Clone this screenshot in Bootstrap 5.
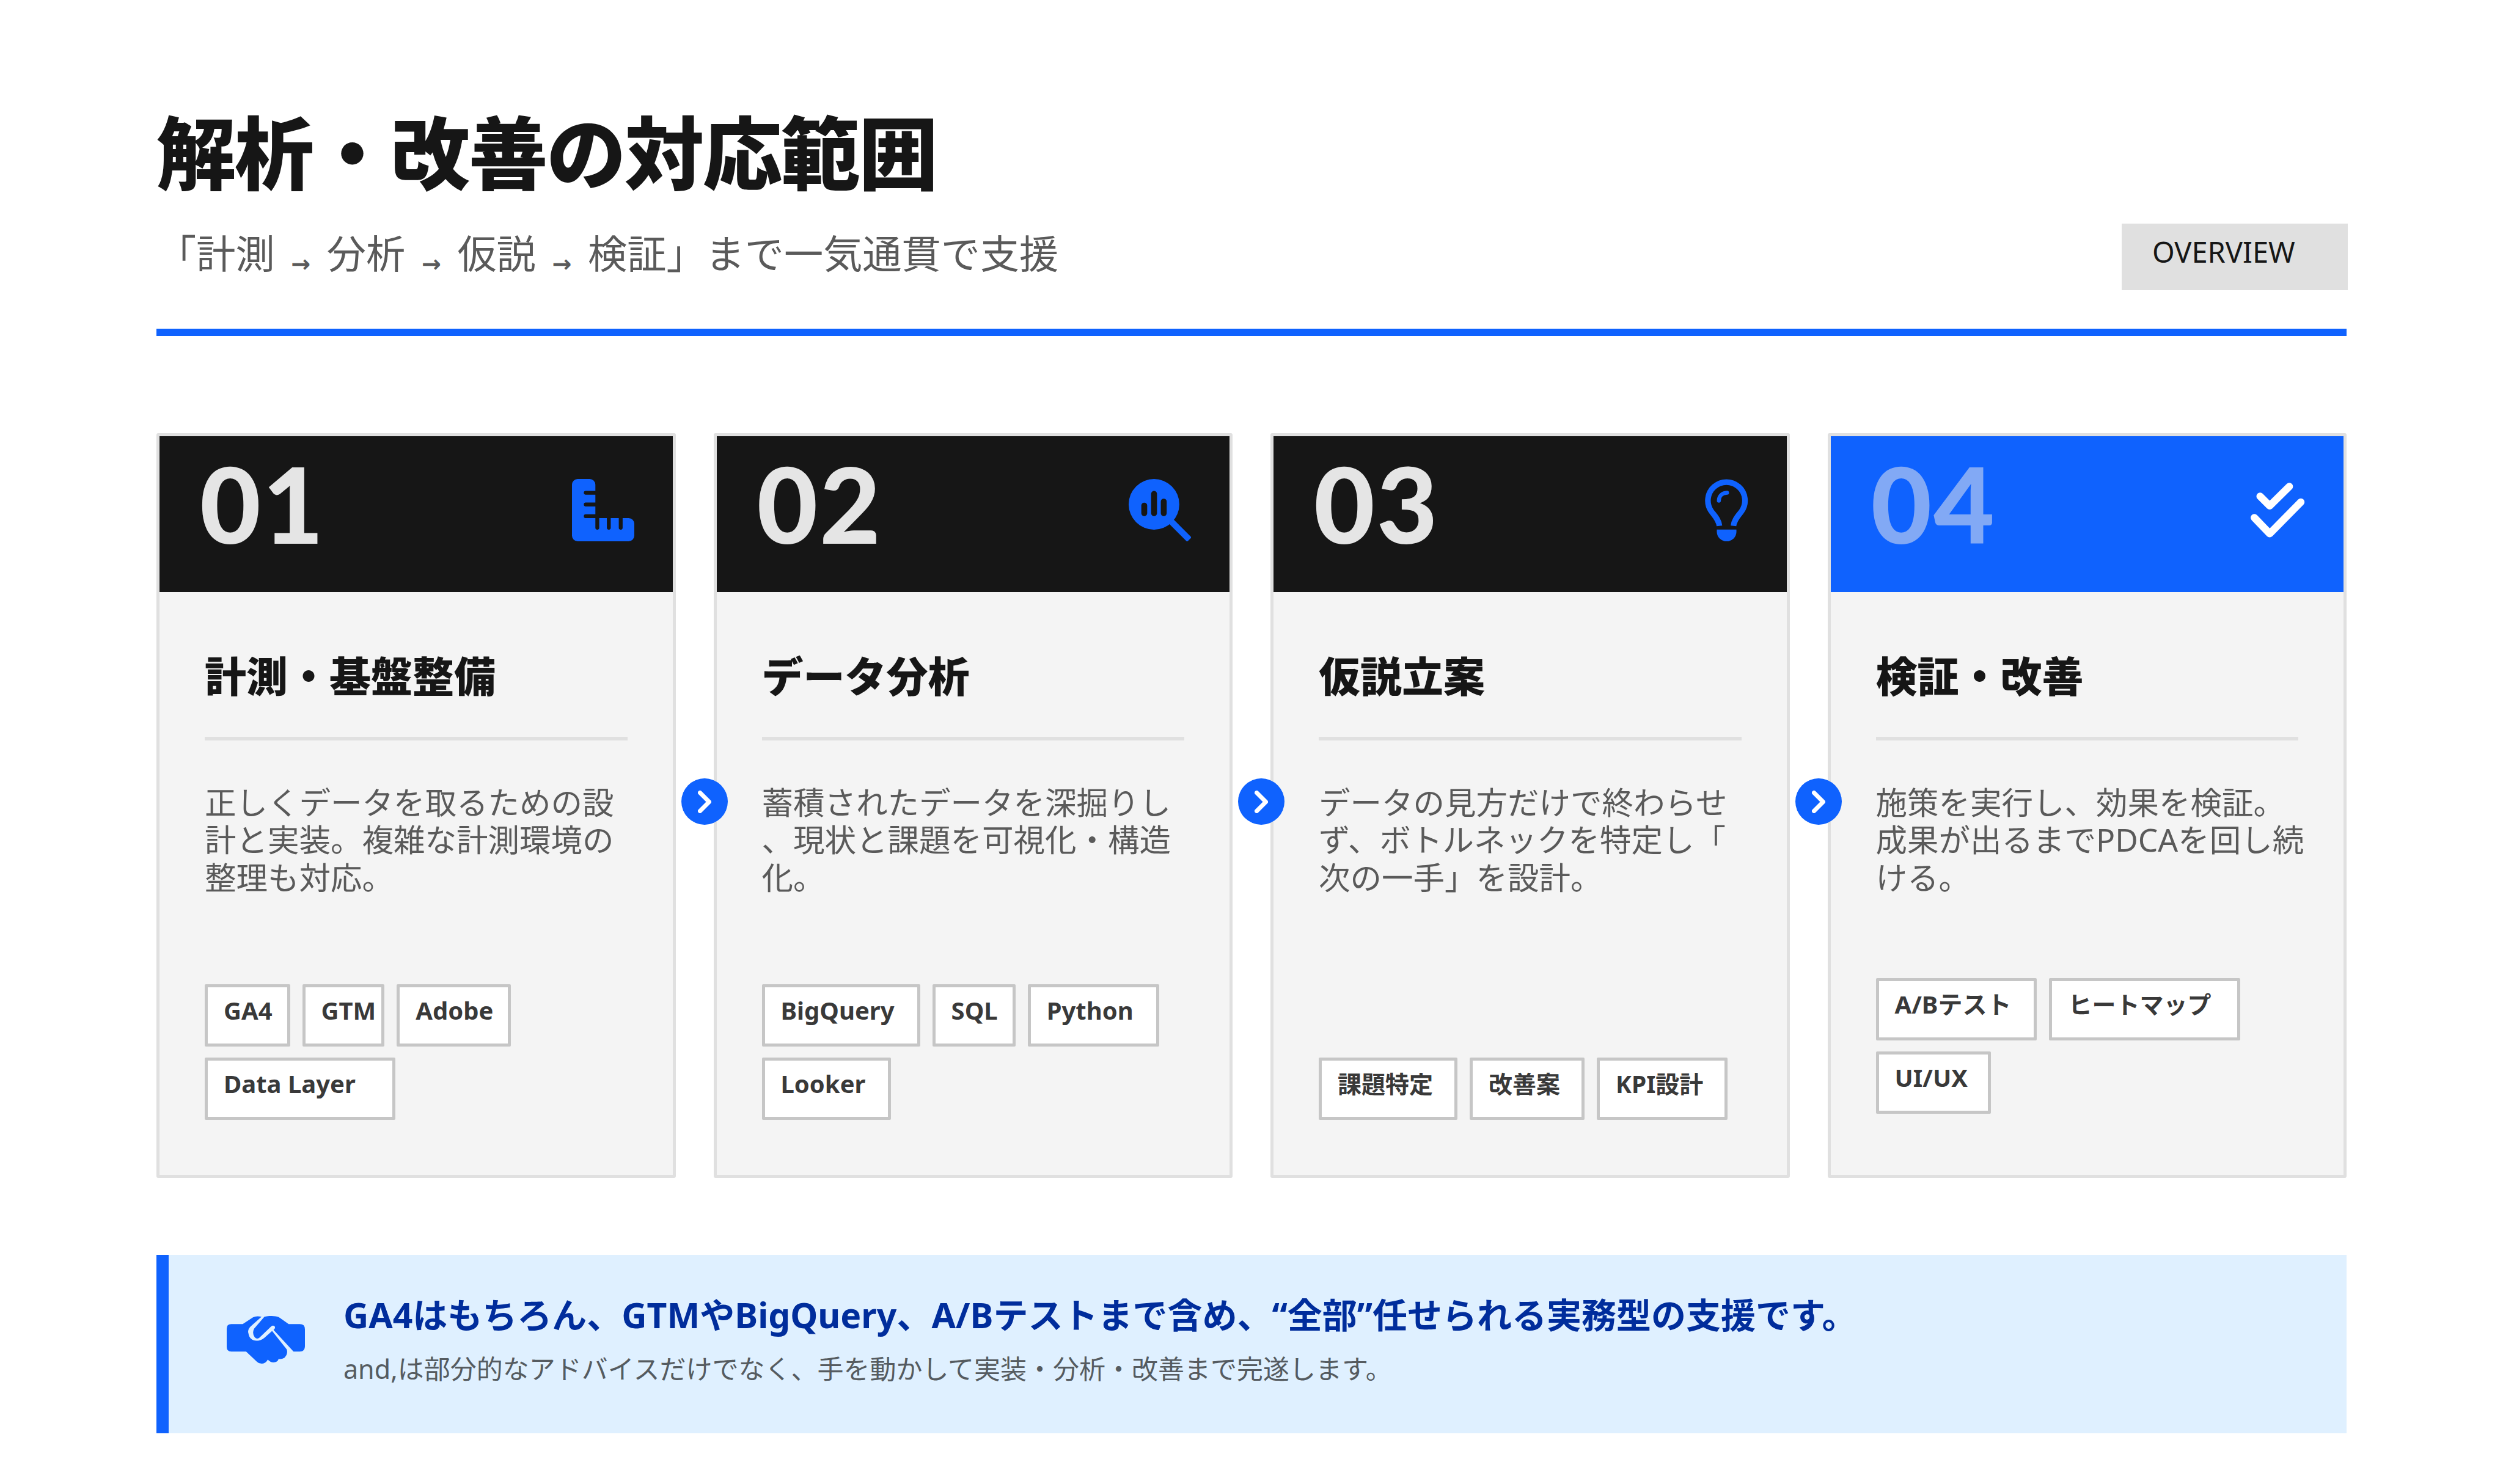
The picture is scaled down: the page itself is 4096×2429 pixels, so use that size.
<!DOCTYPE html>
<html lang="ja"><head><meta charset="utf-8">
<link href="https://cdn.jsdelivr.net/npm/bootstrap@5.3.0/dist/css/bootstrap.min.css" rel="stylesheet">
<style>
html,body{margin:0;background:#fff}
body{width:4096px;height:2429px;overflow:hidden;font-family:"Noto Sans","Noto Sans CJK JP",sans-serif;color:#161616}
.slide{width:4096px;height:2429px;padding:175px 256px 0}
.ttl{font-size:130px;font-weight:900;line-height:150px;letter-spacing:-2.3px;margin:0;color:#161616}
.sub-row{margin-top:41px;height:109px}
.sub{font-size:64.2px;font-weight:400;color:#5a5a5a;line-height:90px;margin-left:1px;padding-top:5px}
.arr{font-family:"DejaVu Sans",sans-serif;font-weight:700;font-size:38px;margin:0 10px;vertical-align:-6px}
.tagline{background:#e0e0e0;font-size:47px;width:370px;height:109px;padding:14px 0 0 50px;margin-right:-2px;color:#161616;line-height:64px}
.rule{height:12px;background:#0f62fe;margin-top:63px}
.cards{display:grid;grid-template-columns:repeat(4,1fr);gap:62px;margin-top:159px}
.step{position:relative;height:1219px;background:#f4f4f4;border:5px solid #e0e0e0;border-radius:3px}
.step-h{height:255px;background:#161616;padding:0 63px 14px 66px}
.step-h.is-last{background:#0f62fe}
.num{font-family:"Lato",sans-serif;font-weight:900;font-size:172px;letter-spacing:3px;line-height:1;color:#e5e5e5;margin-top:-22px}
.is-last .num{color:#82a9f5}
.step-b{flex:1;padding:0 74px}
.step-t{font-size:68px;font-weight:900;margin:0;padding:98px 0 59px;line-height:80px;border-bottom:6px solid #e0e0e0}
.step-d{font-size:51.5px;font-weight:400;color:#5a5a5a;line-height:61.4px;margin:71px -15px 0 0;line-break:anywhere}
.tags{margin-top:auto;gap:18px 20px;padding-bottom:90px}
.tags-up{padding-bottom:100px}
.chip{background:#fff;border:5px solid #c6c6c6;border-radius:2px;font-size:40px;font-weight:700;color:#393939;padding:14px 24px 30px 26px;line-height:48px}
.chip-s{padding-right:9px}
.chip-x{padding-right:33px}
.chip-m{padding-right:37px}
.chip-l{padding-right:60px}
.chip-j{font-size:39px;padding-right:35px}
.chip-k{font-size:39px;padding-right:43px}
.go{position:absolute;right:-90px;top:560px;width:76px;height:76px;border-radius:50%;background:#0f62fe;z-index:3}
.note{margin-top:126px;height:292px;background:#dff0ff;border-left:20px solid #0f62fe;padding-left:95px;gap:63px}
.note-ic{margin-bottom:14px}
.note-x{padding-bottom:17px}
.note-a{font-size:57px;font-weight:700;color:#002d9c;line-height:70px;margin:0}
.note-b{font-size:43px;font-weight:400;color:#555b60;line-height:50px;margin:29px 0 0}
</style></head><body>
<div class="slide">
<h1 class="ttl">解析・改善の対応範囲</h1>
<div class="sub-row d-flex justify-content-between align-items-center"><div class="sub">「計測 <span class="arr">→</span> 分析 <span class="arr">→</span> 仮説 <span class="arr">→</span> 検証」まで一気通貫で支援</div><div class="tagline">OVERVIEW</div></div>
<div class="rule"></div>
<div class="cards">
<div class="step d-flex flex-column"><div class="step-h d-flex justify-content-between align-items-center"><div class="num">01</div><svg width="102" height="102" viewBox="0 0 110 110"><path fill="#0f62fe" d="M10 0h21.3a10 10 0 0 1 10 10V69H100a10 10 0 0 1 10 10v21a10 10 0 0 1-10 10H10a10 10 0 0 1-10-10V10A10 10 0 0 1 10 0z"/><path fill="none" stroke="#161616" stroke-width="6.8" stroke-linecap="round" d="M24.3 24.3H46M24.3 45H46M24.3 65.7H46M44.7 66V86M65 66V86M86 66V86"/></svg></div>
<div class="step-b d-flex flex-column"><h3 class="step-t">計測・基盤整備</h3><p class="step-d">正しくデータを取るための設計と実装。複雑な計測環境の整理も対応。</p><div class="tags d-flex flex-wrap"><span class="chip">GA4</span><span class="chip chip-s">GTM</span><span class="chip">Adobe</span><span class="chip chip-l">Data Layer</span></div></div>
<div class="go d-flex align-items-center justify-content-center"><svg width="22" height="37" viewBox="0 0 22 37" fill="none" stroke="#fff" stroke-width="7" stroke-linecap="round" stroke-linejoin="round"><path d="M3.5 3.5l15 15-15 15"/></svg></div></div>
<div class="step d-flex flex-column"><div class="step-h d-flex justify-content-between align-items-center"><div class="num">02</div><svg width="102" height="102" viewBox="0 0 110 110"><path d="M73 73l34 34" stroke="#0f62fe" stroke-width="11" fill="none"/><path fill="#0f62fe" fill-rule="evenodd" d="M44.7 0a44.7 44.7 0 1 1 0 89.4a44.7 44.7 0 0 1 0-89.4zM27.5 41.7a5.2 5.2 0 0 0-5.2 5.2v13.6a5.2 5.2 0 0 0 10.4 0V46.9a5.2 5.2 0 0 0-5.2-5.2zM44.8 21a5.2 5.2 0 0 0-5.2 5.2v34.3a5.2 5.2 0 0 0 10.4 0V26.2a5.2 5.2 0 0 0-5.2-5.2zM61.9 34.7a5.2 5.2 0 0 0-5.2 5.2v20.6a5.2 5.2 0 0 0 10.4 0V39.9a5.2 5.2 0 0 0-5.2-5.2z"/></svg></div>
<div class="step-b d-flex flex-column"><h3 class="step-t">データ分析</h3><p class="step-d">蓄積されたデータを深掘りし、現状と課題を可視化・構造化。</p><div class="tags d-flex flex-wrap"><span class="chip chip-m">BigQuery</span><span class="chip">SQL</span><span class="chip chip-m">Python</span><span class="chip chip-m">Looker</span></div></div>
<div class="go d-flex align-items-center justify-content-center"><svg width="22" height="37" viewBox="0 0 22 37" fill="none" stroke="#fff" stroke-width="7" stroke-linecap="round" stroke-linejoin="round"><path d="M3.5 3.5l15 15-15 15"/></svg></div></div>
<div class="step d-flex flex-column"><div class="step-h d-flex justify-content-between align-items-center"><div class="num">03</div><svg width="71" height="102" viewBox="0 0 76 110"><path fill="none" stroke="#0f62fe" stroke-width="10" d="M25.3 82.7C24 71 16 64 11 57A32.7 32.7 0 1 1 64.4 57C59.4 64 51.4 71 50.1 82.7"/><path fill="none" stroke="#0f62fe" stroke-width="7" stroke-linecap="round" d="M24.3 38.3C24.3 30 30 24.7 38.7 24.3"/><path fill="#0f62fe" d="M20.7 89.3H55.3V93A17.3 17.3 0 0 1 20.7 93z"/></svg></div>
<div class="step-b d-flex flex-column"><h3 class="step-t">仮説立案</h3><p class="step-d">データの見方だけで終わらせず、ボトルネックを特定し「次の一手」を設計。</p><div class="tags d-flex flex-wrap"><span class="chip chip-j">課題特定</span><span class="chip chip-j">改善案</span><span class="chip chip-j">KPI設計</span></div></div>
<div class="go d-flex align-items-center justify-content-center"><svg width="22" height="37" viewBox="0 0 22 37" fill="none" stroke="#fff" stroke-width="7" stroke-linecap="round" stroke-linejoin="round"><path d="M3.5 3.5l15 15-15 15"/></svg></div></div>
<div class="step d-flex flex-column"><div class="step-h is-last d-flex justify-content-between align-items-center"><div class="num">04</div><svg width="89" height="90" viewBox="0 0 96 97" fill="none" stroke="#fff" stroke-width="13" stroke-linecap="round" stroke-linejoin="round"><path d="M16.7 24L33.7 41L68.3 6.7"/><path d="M6.5 61.7L33.7 90L88.7 34.3"/></svg></div>
<div class="step-b d-flex flex-column"><h3 class="step-t">検証・改善</h3><p class="step-d">施策を実行し、効果を検証。成果が出るまでPDCAを回し続ける。</p><div class="tags tags-up d-flex flex-wrap"><span class="chip chip-m">A/Bテスト</span><span class="chip chip-k">ヒートマップ</span><span class="chip chip-x">UI/UX</span></div></div></div>
</div>
<div class="note d-flex align-items-center"><svg class="note-ic" width="128" height="79" viewBox="0 0 137 84" fill="#0f62fe"><path d="M0 22Q0 14 8 14H28L46 2Q52 -1 61 1L42 18Q36 24 38 30Q40 43 53 43Q60 43 66 38L79.5 26L105 58Q108 66 101 73Q96 76 91 75Q89 81 82 81Q76 81 72 76Q68 84 60 83Q56 83 53 80L34 62H8Q0 62 0 54Z"/><path d="M66 1Q74 -1 82 0Q89 0 93 3L108.5 14H128Q137 14 137 23V53Q137 62 128 62H117L82 24Q86 21 84 18Q81 15 78 18L57 38Q52 41 49 37Q44 30 48 22Z"/></svg>
<div class="note-x"><p class="note-a">GA4はもちろん、GTMやBigQuery、A/Bテストまで含め、“全部”任せられる実務型の支援です。</p><p class="note-b">and,は部分的なアドバイスだけでなく、手を動かして実装・分析・改善まで完遂します。</p></div></div>
</div>
<script src="https://cdn.jsdelivr.net/npm/bootstrap@5.3.0/dist/js/bootstrap.bundle.min.js"></script>
</body></html>
